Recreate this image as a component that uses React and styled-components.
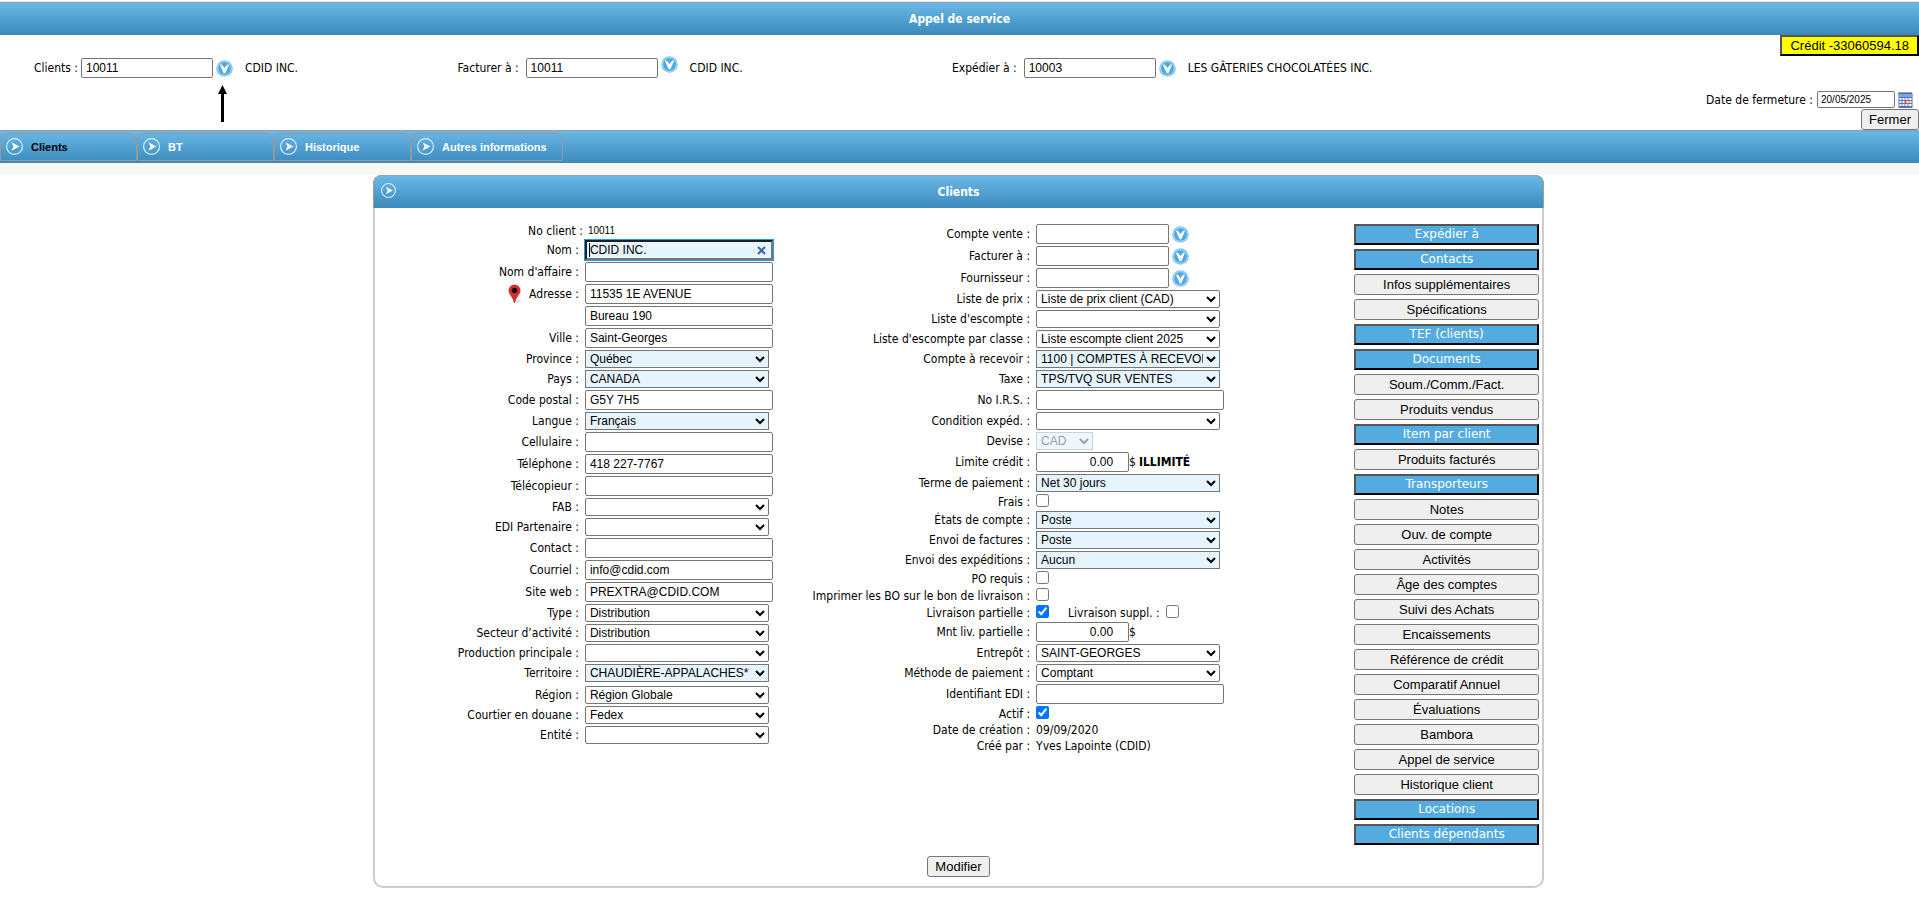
import React, { useId } from "react";
import styled, { createGlobalStyle, css } from "styled-components";

const GlobalStyle = createGlobalStyle`
  * {
    box-sizing: border-box;
  }
  body {
    margin: 0;
    background-color: #fff;
    color: #000;
    font-family: "DejaVu Sans Condensed", "DejaVu Sans", sans-serif;
    font-size: 12px;
    line-height: 14px;
  }
`;

const barStyle = css`
  border-top: 1px solid #9d9d9d;
  background-image: linear-gradient(#69b8e8, #3b8abb);
`;

const PageTitle = styled.h1`
  ${barStyle}
  margin: 2px 0 0;
  height: 33px;
  display: flex;
  align-items: center;
  justify-content: center;
  color: #fff;
  font-size: 12px;
  box-shadow: 0 -1px #e3e9f2;
`;

const Header = styled.header`
  display: flex;
`;

const Lookups = styled.div`
  flex: 1;
  display: grid;
  grid-template-columns: 424fr 495fr 755fr;
  align-content: start;
  padding: 21px 0 0 34px;
`;

const Lookup = styled.div`
  height: 24px;
  display: flex;
  align-items: center;
  white-space: nowrap;

  label {
    margin-right: ${(props) => (props.$tight ? "3px" : "7px")};
  }
`;

const LookupName = styled.span`
  margin-left: 12px;
`;

const IconButton = styled.button`
  position: relative;
  display: block;
  width: 17px;
  height: 17px;
  margin-left: 3px;
  padding: 0;
  border: none;
  background: none;
  cursor: pointer;
  align-self: ${(props) => (props.$raised ? "flex-start" : "auto")};

  > svg {
    display: block;
  }
`;

const ArrowMark = styled.span`
  position: absolute;
  top: 25px;
  left: 2px;
  width: 9px;
  height: 37px;
  pointer-events: none;

  svg {
    display: block;
  }
`;

const Aside = styled.div`
  display: flex;
  flex-direction: column;
  align-items: flex-end;
  gap: 35px;
`;

const CloseBlock = styled.div`
  display: flex;
  flex-direction: column;
  align-items: flex-end;
  gap: 1px;
`;

const DateRow = styled.div`
  display: flex;
  align-items: center;
  padding-right: 4px;

  label {
    margin-right: 4px;
  }
`;

const controlStyle = css`
  border: 1px solid #767676;
  border-radius: 2px;
  color: #000;
  font-family: "Liberation Sans", Arial, sans-serif;
  font-size: 12px;
  background-color: ${(props) => (props.$required ? "#e6f4fd" : "#fff")};
`;

const TextInput = styled.input`
  ${controlStyle}
  width: ${(props) => props.$width || "188px"};
  height: 20px;
  padding: 0 4px;

  ${(props) =>
    props.$amount &&
    css`
      padding-right: 15px;
      text-align: right;
    `}

  ${(props) =>
    props.$active &&
    css`
      border: 2px solid;
      border-color: #1f1f1f #767676 #767676 #1f1f1f;
      border-radius: 0;
      padding: 0 3px;
      outline: 1px solid #1c9cf0;
    `}
`;

const DateInput = styled.input`
  ${controlStyle}
  width: 78px;
  height: 17px;
  padding: 0 3px;
  font-size: 10px;
`;

const Select = styled.select`
  ${controlStyle}
  width: ${(props) => props.$width || "184px"};
  height: 18px;
  padding: 0;
  border-radius: ${(props) => (props.$required ? "0" : "2px")};

  &:disabled {
    color: #a0a0a0;
    background-color: #eef7fd;
    border-color: #c8d4dc;
    opacity: 1;
  }
`;

const CheckBox = styled.input`
  width: 13px;
  height: 13px;
  margin: 0;
  align-self: flex-start;
  flex: none;
`;

const Button = styled.button`
  height: 21px;
  padding: 0 7px;
  border: 1px solid #767676;
  border-radius: 3px;
  background-color: #efefef;
  color: #000;
  font-family: "Liberation Sans", Arial, sans-serif;
  font-size: 13px;
  line-height: 15px;
  cursor: pointer;

  ${(props) =>
    props.$filled &&
    css`
      border: 2px solid;
      border-color: #555 #000 #000 #555;
      border-radius: 0;
      background-color: #54abe0;
      color: #fff;
      font-family: "DejaVu Sans", Verdana, sans-serif;
      font-size: 12px;
    `}
`;

const CreditButton = styled(Button)`
  padding: 0 8px;
  border: 2px solid;
  border-color: #555 #000 #000 #555;
  border-radius: 0;
  background-color: #ff0;
`;

const TabBar = styled.nav`
  ${barStyle}
  height: 33px;
  display: flex;
  align-items: flex-start;
  padding-top: 2px;
`;

const Tab = styled.a`
  min-width: 137px;
  height: 28px;
  display: flex;
  align-items: center;
  gap: 8px;
  padding: 0 15px 2px 5px;
  border: 1px solid #979797;
  border-radius: 9px 9px 0 0;
  color: ${(props) => (props.$current ? "#000" : "#fff")};
  font-family: "Liberation Sans", Arial, sans-serif;
  font-size: 11px;
  font-weight: bold;
  text-decoration: none;

  span {
    padding-top: 2px;
  }
`;

const Strip = styled.div`
  height: 12px;
  background-color: #f7f7f7;
`;

const Main = styled.main`
  padding-right: 2px;
`;

const Panel = styled.section`
  width: calc(61% + 2px);
  min-width: 1100px;
  margin: 0 auto;
  border: 2px solid #ccc;
  border-top: none;
  border-radius: 10px;
`;

const PanelHeader = styled.div`
  ${barStyle}
  height: 33px;
  display: grid;
  grid-template-columns: 1fr auto 1fr;
  align-items: center;
  margin: 0 -2px;
  padding: 0 7px;
  border-left: 1px solid #9d9d9d;
  border-right: 1px solid #9d9d9d;
  border-radius: 8px 8px 0 0;
  color: #fff;

  h2 {
    margin: 0;
    font-size: 12px;
  }
  svg {
    display: block;
    margin-bottom: 4px;
  }
`;

const PanelBody = styled.div`
  display: grid;
  grid-template-columns: 398fr 451fr 315fr;
  align-items: start;
  padding: 16px 3px 0 0;
`;

const Column = styled.div`
  display: flex;
  flex-direction: column;
  gap: 2px;
`;

const rowHeights = { text: 14, check: 15, select: 18, input: 20 };

const Row = styled.div`
  display: flex;
  justify-content: flex-end;
  align-items: center;
  min-height: ${(props) => rowHeights[props.$kind]}px;
  padding-bottom: ${(props) => (props.$spaced ? "2px" : "0")};
  white-space: nowrap;
`;

const RowLabel = styled.label`
  display: flex;
  align-items: center;
  gap: 7px;
`;

const Value = styled.div`
  position: relative;
  width: 188px;
  margin-left: 6px;
  display: flex;
  align-items: center;
  align-self: ${(props) => (props.$top ? "stretch" : "auto")};

  strong {
    margin-left: 3px;
  }

  ${(props) =>
    props.$tight &&
    css`
      margin-left: 2px;
      padding-left: 3px;
    `}
`;

const ClientNumber = styled.span`
  font-family: "Liberation Sans", Arial, sans-serif;
  font-size: 10px;
`;

const ExtraLabel = styled.label`
  margin: 0 6px 0 19px;
`;

const ClearButton = styled.button`
  position: absolute;
  right: 7px;
  top: 6px;
  width: 9px;
  height: 9px;
  padding: 0;
  border: none;
  background: none;

  svg {
    display: block;
  }
`;

const Caret = styled.span`
  position: absolute;
  left: 4px;
  top: 3px;
  width: 1px;
  height: 14px;
  background-color: #000;
`;

const SideMenu = styled.div`
  width: 185px;
  justify-self: end;
  display: flex;
  flex-direction: column;
  gap: 4px;
`;

const PanelFooter = styled.div`
  display: flex;
  justify-content: center;
  padding: 11px 0 9px;
`;

function DownIcon() {
  return (
    <svg width="17" height="17" viewBox="0 0 17 17">
      <circle cx="8.5" cy="8.5" r="8.3" fill="#86c7ef" />
      <circle cx="8.5" cy="8.5" r="6.8" fill="#4ea9e1" stroke="#a9d8f4" />
      <path d="M4 4.8 5.6 4.6 8.5 8l2.9-3.400 1.600.2-3.600 8.400H7.600z" fill="#fff" />
    </svg>
  );
}

function RightIcon({ size }) {
  return (
    <svg width={size} height={size} viewBox="0 0 17 17">
      <circle cx="8.5" cy="8.5" r="7.9" fill="none" stroke="#d9eefa" strokeWidth="1.2" />
      <path d="M5.4 4.2 13.4 8.5l-8 4.3L7.6 8.5z" fill="#fff" />
    </svg>
  );
}

function PinIcon() {
  return (
    <svg width="14" height="20" viewBox="0 0 14 20">
      <ellipse cx="9" cy="17" rx="4" ry="1.5" fill="#e4e4e4" />
      <path d="M6.5 0.5a6 6 0 0 1 6 6c0 4-4.6 6.5-5.5 12.5H6C5.1 13 0.5 10.5 0.5 6.5a6 6 0 0 1 6-6z" fill="#d3302f" />
      <circle cx="6.5" cy="6.5" r="2.8" fill="#1c0a0a" />
    </svg>
  );
}

function CalendarIcon() {
  return (
    <svg width="15" height="16" viewBox="0 0 14 16">
      <rect width="14" height="15" y="1" fill="#4f78c0" />
      <path d="M0 1h14" stroke="#555" strokeWidth="2" strokeDasharray="1 1" />
      <rect y="2" width="14" height="3" fill="#7ba3e6" />
      <path
        d="M1 6h2v2H1zM4 6h2v2H4zM7 6h2v2H7zM10 6h3v2h-3zM1 9h2v2H1zM4 9h2v2H4zM10 9h3v2h-3zM1 12h2v2H1zM4 12h2v2H4zM7 12h2v2H7zM10 12h3v2h-3z"
        fill="#fff"
      />
      <rect x="7.5" y="8.5" width="3" height="3" fill="#fff" stroke="#e8502c" />
    </svg>
  );
}

const headerLookups = [
  { label: "Clients :", value: "10011", name: "CDID INC.", marked: true, tight: true },
  { label: "Facturer à :", value: "10011", name: "CDID INC.", raised: true },
  { label: "Expédier à :", value: "10003", name: "LES GÂTERIES CHOCOLATÉES INC." },
];

const tabs = ["Clients", "BT", "Historique", "Autres informations"];

const leftFields = [
  { label: "No client :", kind: "text", value: "10011", small: true },
  { label: "Nom :", kind: "input", value: "CDID INC.", required: true, active: true },
  { label: "Nom d'affaire :", kind: "input" },
  { label: "Adresse :", kind: "input", value: "11535 1E AVENUE", pin: true },
  { ariaLabel: "Adresse (suite)", kind: "input", value: "Bureau 190" },
  { label: "Ville :", kind: "input", value: "Saint-Georges" },
  { label: "Province :", kind: "select", value: "Québec", required: true },
  { label: "Pays :", kind: "select", value: "CANADA", required: true },
  { label: "Code postal :", kind: "input", value: "G5Y 7H5" },
  { label: "Langue :", kind: "select", value: "Français", required: true },
  { label: "Cellulaire :", kind: "input" },
  { label: "Téléphone :", kind: "input", value: "418 227-7767" },
  { label: "Télécopieur :", kind: "input" },
  { label: "FAB :", kind: "select" },
  { label: "EDI Partenaire :", kind: "select" },
  { label: "Contact :", kind: "input" },
  { label: "Courriel :", kind: "input", value: "info@cdid.com" },
  { label: "Site web :", kind: "input", value: "PREXTRA@CDID.COM" },
  { label: "Type :", kind: "select", value: "Distribution" },
  { label: "Secteur d’activité :", kind: "select", value: "Distribution" },
  { label: "Production principale :", kind: "select" },
  { label: "Territoire :", kind: "select", value: "CHAUDIÈRE-APPALACHES*", required: true, spaced: true },
  { label: "Région :", kind: "select", value: "Région Globale" },
  { label: "Courtier en douane :", kind: "select", value: "Fedex" },
  { label: "Entité :", kind: "select" },
];

const rightFields = [
  { label: "Compte vente :", kind: "input", lookup: true },
  { label: "Facturer à :", kind: "input", lookup: true },
  { label: "Fournisseur :", kind: "input", lookup: true },
  { label: "Liste de prix :", kind: "select", value: "Liste de prix client (CAD)" },
  { label: "Liste d'escompte :", kind: "select" },
  { label: "Liste d'escompte par classe :", kind: "select", value: "Liste escompte client 2025" },
  { label: "Compte à recevoir :", kind: "select", value: "1100 | COMPTES À RECEVOIR", required: true },
  { label: "Taxe :", kind: "select", value: "TPS/TVQ SUR VENTES", required: true },
  { label: "No I.R.S. :", kind: "input" },
  { label: "Condition expéd. :", kind: "select" },
  { label: "Devise :", kind: "select", value: "CAD", required: true, disabled: true, width: "57px" },
  { label: "Limite crédit :", kind: "input", value: "0.00", amount: true, note: "ILLIMITÉ" },
  { label: "Terme de paiement :", kind: "select", value: "Net 30 jours", required: true },
  { label: "Frais :", kind: "check" },
  { label: "États de compte :", kind: "select", value: "Poste", required: true },
  { label: "Envoi de factures :", kind: "select", value: "Poste", required: true },
  { label: "Envoi des expéditions :", kind: "select", value: "Aucun", required: true },
  { label: "PO requis :", kind: "check" },
  { label: "Imprimer les BO sur le bon de livraison :", kind: "check" },
  { label: "Livraison partielle :", kind: "check", checked: true, extra: "Livraison suppl. :" },
  { label: "Mnt liv. partielle :", kind: "input", value: "0.00", amount: true },
  { label: "Entrepôt :", kind: "select", value: "SAINT-GEORGES" },
  { label: "Méthode de paiement :", kind: "select", value: "Comptant" },
  { label: "Identifiant EDI :", kind: "input" },
  { label: "Actif :", kind: "check", checked: true },
  { label: "Date de création :", kind: "text", value: "09/09/2020" },
  { label: "Créé par :", kind: "text", value: "Yves Lapointe (CDID)" },
];

const sideButtons = [
  { text: "Expédier à", filled: true },
  { text: "Contacts", filled: true },
  { text: "Infos supplémentaires" },
  { text: "Spécifications" },
  { text: "TEF (clients)", filled: true },
  { text: "Documents", filled: true },
  { text: "Soum./Comm./Fact." },
  { text: "Produits vendus" },
  { text: "Item par client", filled: true },
  { text: "Produits facturés" },
  { text: "Transporteurs", filled: true },
  { text: "Notes" },
  { text: "Ouv. de compte" },
  { text: "Activités" },
  { text: "Âge des comptes" },
  { text: "Suivi des Achats" },
  { text: "Encaissements" },
  { text: "Référence de crédit" },
  { text: "Comparatif Annuel" },
  { text: "Évaluations" },
  { text: "Bambora" },
  { text: "Appel de service" },
  { text: "Historique client" },
  { text: "Locations", filled: true },
  { text: "Clients dépendants", filled: true },
];

function HeaderLookup({ label, value, name, raised, marked, tight }) {
  const id = useId();
  return (
    <Lookup $tight={tight}>
      <label htmlFor={id}>{label}</label>
      <TextInput id={id} $width="132px" defaultValue={value} />
      <IconButton type="button" aria-label="Rechercher" $raised={raised}>
        <DownIcon />
        {marked && (
          <ArrowMark>
            <svg width="9" height="37" viewBox="0 0 9 37">
              <path d="M4.5 0 9 9H6v28H3V9H0z" fill="#000" />
            </svg>
          </ArrowMark>
        )}
      </IconButton>
      <LookupName>{name}</LookupName>
    </Lookup>
  );
}

function Control({ field, id }) {
  const { kind, value } = field;
  if (kind === "text") {
    return field.small ? <ClientNumber>{value}</ClientNumber> : <span>{value}</span>;
  }
  if (kind === "check") {
    return <CheckBox id={id} type="checkbox" defaultChecked={field.checked} />;
  }
  if (kind === "select") {
    return (
      <Select id={id} $required={field.required} $width={field.width} disabled={field.disabled}>
        <option>{value}</option>
      </Select>
    );
  }
  return (
    <TextInput
      id={id}
      aria-label={field.ariaLabel}
      $required={field.required}
      $active={field.active}
      $amount={field.amount}
      $width={field.lookup ? "133px" : field.amount ? "93px" : undefined}
      defaultValue={value}
    />
  );
}

function Field({ field }) {
  const id = useId();
  return (
    <Row $kind={field.kind} $spaced={field.spaced}>
      {field.label && (
        <RowLabel htmlFor={field.kind === "text" ? undefined : id}>
          {field.pin && <PinIcon />}
          {field.label}
        </RowLabel>
      )}
      <Value $top={field.kind === "check"} $tight={field.small}>
        <Control field={field} id={id} />
        {field.active && (
          <>
            <Caret />
            <ClearButton type="button" aria-label="Effacer">
              <svg width="9" height="9" viewBox="0 0 9 9">
                <path d="M1 1l7 7M8 1 1 8" stroke="#3d62ad" strokeWidth="2" />
              </svg>
            </ClearButton>
          </>
        )}
        {field.lookup && (
          <IconButton type="button" aria-label="Rechercher">
            <DownIcon />
          </IconButton>
        )}
        {field.amount && "$"}
        {field.note && <strong>{field.note}</strong>}
        {field.extra && (
          <>
            <ExtraLabel htmlFor={`${id}-extra`}>{field.extra}</ExtraLabel>
            <CheckBox id={`${id}-extra`} type="checkbox" />
          </>
        )}
      </Value>
    </Row>
  );
}

function App() {
  return (
    <>
      <GlobalStyle />
      <PageTitle>Appel de service</PageTitle>
      <Header>
        <Lookups>
          {headerLookups.map((item) => (
            <HeaderLookup key={item.label} {...item} />
          ))}
        </Lookups>
        <Aside>
          <CreditButton type="button">Crédit -33060594.18</CreditButton>
          <CloseBlock>
            <DateRow>
              <label htmlFor="closeDate">Date de fermeture :</label>
              <DateInput id="closeDate" defaultValue="20/05/2025" />
              <IconButton type="button" aria-label="Calendrier">
                <CalendarIcon />
              </IconButton>
            </DateRow>
            <Button type="button">Fermer</Button>
          </CloseBlock>
        </Aside>
      </Header>
      <TabBar>
        {tabs.map((tab, i) => (
          <Tab key={tab} href="#" $current={i === 0}>
            <RightIcon size={17} />
            <span>{tab}</span>
          </Tab>
        ))}
      </TabBar>
      <Strip />
      <Main>
        <Panel>
          <PanelHeader>
            <RightIcon size={15} />
            <h2>Clients</h2>
          </PanelHeader>
          <PanelBody>
            <Column>
              {leftFields.map((field) => (
                <Field key={field.label || field.ariaLabel} field={field} />
              ))}
            </Column>
            <Column>
              {rightFields.map((field) => (
                <Field key={field.label} field={field} />
              ))}
            </Column>
            <SideMenu>
              {sideButtons.map(({ text, filled }) => (
                <Button key={text} type="button" $filled={filled}>
                  {text}
                </Button>
              ))}
            </SideMenu>
          </PanelBody>
          <PanelFooter>
            <Button type="button">Modifier</Button>
          </PanelFooter>
        </Panel>
      </Main>
    </>
  );
}

export default App;
